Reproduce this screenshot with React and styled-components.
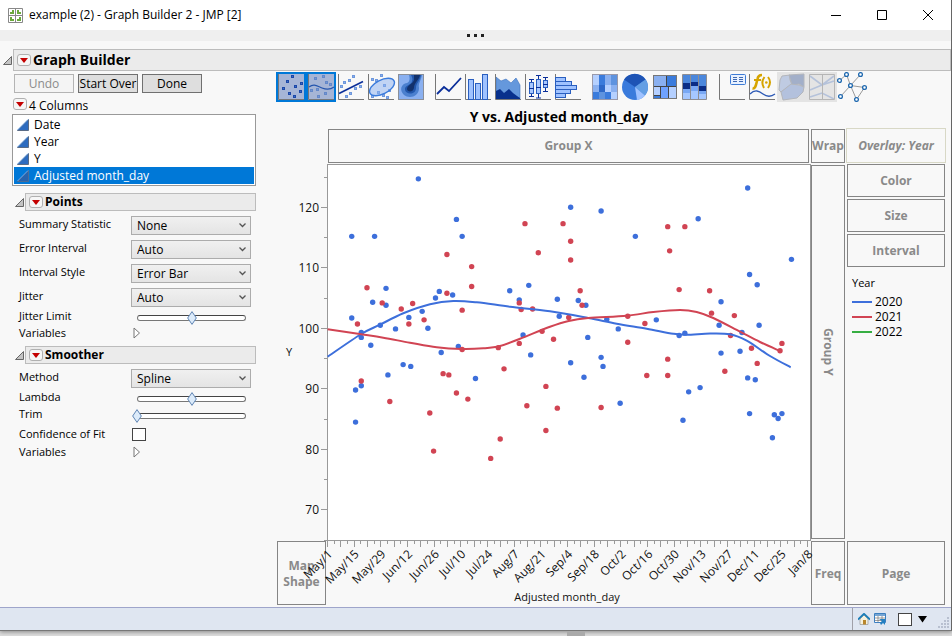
import React from "react";
import styled, { createGlobalStyle, css } from "styled-components";

const BLUE = "#3d6fdb";
const RED = "#d14453";
const GREEN = "#36ae42";
const INK = "#0b2f9a";
const MID = "#3a7bdc";
const LIGHT = "#8ab0f0";
const PALE = "#b5d0ff";

const Global = createGlobalStyle`
  *, *::before, *::after { box-sizing: border-box; }
  body { margin: 0; background: #dcdcdc; font: 12px/16px "Open Sans", "Noto Sans", sans-serif; color: #000; }
  button, input, select { font: inherit; color: inherit; margin: 0; }
  button { padding: 0; border: 0; background: none; }
  svg { display: block; }
`;

const Window = styled.div`
  display: flex;
  flex-direction: column;
  min-height: calc(100vh - 5px);
  background: #f8f8f8;
  border-right: 1px solid #666;
  border-bottom: 1px solid #777;
  box-shadow: 0 1px 4px #888;
`;

const TitleBar = styled.header`
  display: flex;
  align-items: center;
  height: 30px;
  padding-left: 8px;
  gap: 6px;
  background: #fff;
`;
const WindowTitle = styled.h1`
  flex: 1;
  margin: 0;
  font-size: 12px;
  font-weight: 400;
`;
const WindowControls = styled.div`
  display: flex;
`;
const WindowButton = styled.button`
  display: grid;
  place-items: center;
  width: 46px;
  height: 30px;
`;
const MenuStrip = styled.div`
  display: grid;
  place-items: center;
  height: 11px;
  background: #efefef;
`;

const OutlineRow = styled.div`
  display: flex;
  align-items: center;
  gap: 1px;
  padding-left: 3px;
  margin-top: ${(p) => p.$top}px;
`;
const OutlineBar = styled.div`
  display: flex;
  flex: 1;
  align-items: center;
  gap: 2px;
  height: ${(p) => (p.$large ? 22 : 18)}px;
  padding-left: 3px;
  background: #ebebeb;
  border: 1px solid #bcbcbc;
`;
const OutlineTitle = styled.h2`
  margin: 0;
  font-size: ${(p) => (p.$large ? 14 : 12)}px;
  line-height: 16px;
  font-weight: 700;
`;
const MenuButton = styled.button`
  display: grid;
  place-items: center;
  width: 14px;
  height: 12px;
  border: 1px solid #b0b0b0;
  border-radius: 3px;
  background: #f6f6f6;
`;

const Workspace = styled.main`
  display: grid;
  grid-template-columns: 277px 1fr;
  flex: 1;
`;
const Sidebar = styled.aside`
  padding: 3px 21px 0 12px;
`;
const Actions = styled.div`
  display: flex;
  gap: 4px;
  padding-left: 2px;
`;
const ActionButton = styled.button`
  width: 60px;
  height: 19px;
  line-height: 16px;
  white-space: nowrap;
  border: 1px solid #707070;
  background: #dedede;
  &:disabled {
    color: #8b8b8b;
    background: #f4f4f4;
    border-color: #b4b4b4;
  }
`;
const ColumnsHeading = styled.div`
  display: flex;
  align-items: flex-end;
  gap: 2px;
  height: 21px;
  padding-left: 1px;
  > button { margin-bottom: 4px; }
`;
const ColumnList = styled.ul`
  margin: 0;
  padding: 1px;
  list-style: none;
  border: 1px solid #999;
  background: #fff;
`;
const ColumnItem = styled.li`
  display: flex;
  align-items: center;
  gap: 5px;
  height: 17px;
  padding-left: 3px;
  color: ${(p) => (p.$selected ? "#fff" : "#000")};
  background: ${(p) => (p.$selected ? "#0078d7" : "transparent")};
`;
const Properties = styled.div`
  padding: ${(p) => p.$top}px 4px 0 7px;
`;
const Property = styled.div`
  display: grid;
  grid-template-columns: 112px 120px;
  align-items: ${(p) => (p.$tall || p.$tight ? "start" : "center")};
  height: ${(p) => p.$height || 17}px;
  ${(p) => p.$tall && css`padding-top: 2px;`}
`;
const PropertyLabel = styled.label`
  font-size: 11px;
  line-height: ${(p) => (p.$tight ? 12 : 16)}px;
`;
const SelectBox = styled.div`
  display: grid;
  align-items: center;
  > * { grid-area: 1 / 1; }
  > svg { justify-self: end; margin-right: 5px; pointer-events: none; }
`;
const Select = styled.select`
  appearance: none;
  width: 100%;
  height: 19px;
  padding: 0 20px 0 5px;
  line-height: 17px;
  border: 1px solid #acacac;
  border-radius: 0;
  background: linear-gradient(#f0f0f0, #e4e4e4);
`;
const SliderBox = styled.div`
  display: grid;
  align-items: center;
  padding-left: 1px;
  > * { grid-area: 1 / 1; }
`;
const SliderTrack = styled.div`
  height: 6px;
  margin: 0 5px;
  border: 1px solid #777;
  border-top-color: #444;
  border-radius: 3px;
  background: #fff;
`;
const SliderInput = styled.input`
  appearance: none;
  width: 100%;
  height: 16px;
  background: transparent;
  &::-webkit-slider-thumb {
    appearance: none;
    width: 10px;
    height: 10px;
    border: 1px solid #5b80b0;
    background: #dcebfa;
    transform: scaleX(0.68) rotate(45deg);
  }
`;
const Checkbox = styled.input`
  appearance: none;
  width: 14px;
  height: 13px;
  border: 1px solid #444;
  background: #fff;
`;
const CheckCell = styled.div`
  display: flex;
  padding-left: ${(p) => p.$inset}px;
`;

const Stage = styled.section`
  padding-right: 6px;
`;
const Toolbar = styled.div`
  display: flex;
  gap: 7px;
  margin: 1px 0 0 -1px;
`;
const ToolGroup = styled.div`
  display: flex;
`;
const ToolButton = styled.button`
  width: 30px;
  height: 30px;
  background: ${(p) => (p.$selected ? "#a6b5d6" : p.disabled ? "#e4e4e4" : "transparent")};
  box-shadow: ${(p) => (p.$selected ? "inset 0 0 0 2px #0078d7" : "none")};
`;
const GraphTitle = styled.h2`
  height: 27px;
  margin: 0;
  padding-right: 104px;
  font-size: 14px;
  line-height: 30px;
  font-weight: 700;
  text-align: center;
`;
const GraphGrid = styled.div`
  display: grid;
  grid-template-columns: 50px 1fr 34px 100px;
  grid-template-rows: 35px 1fr 65px;
`;
const areas = {
  groupX: "grid-area: 1 / 2; margin: 0 2px 0 1px; height: 34px;",
  wrap: "grid-area: 1 / 3; height: 34px;",
  overlay:
    "grid-area: 1 / 4; margin: -1px -1px 0 1px; height: 35px; font-style: italic; border-color: #d8d8c6;",
  groupY: "grid-area: 2 / 3; margin: 1px 0 2px; writing-mode: vertical-rl;",
  mapShape: "grid-area: 3 / 1; margin: 0 1px 1px 0; padding-top: 2px;",
  freq: "grid-area: 3 / 3; margin-bottom: 1px; padding-top: 2px;",
  page: "grid-area: 3 / 4; margin: 0 0 1px 2px; padding-top: 2px;",
  role: "height: 33px;",
};
const DropZone = styled.div`
  display: flex;
  align-items: center;
  justify-content: center;
  text-align: center;
  font-weight: 700;
  color: #8a8a8a;
  border: 1px solid #858585;
  ${(p) => areas[p.$area]}
`;
const RoleColumn = styled.div`
  grid-area: 2 / 4;
  display: flex;
  flex-direction: column;
  gap: 2px;
  padding-left: 2px;
`;
const Legend = styled.div`
  padding: 5px 0 0 5px;
`;
const LegendTitle = styled.div`
  padding-bottom: 2px;
  font-size: 11px;
  line-height: 18px;
`;
const LegendItem = styled.div`
  display: flex;
  align-items: center;
  gap: 3px;
  height: 15px;
  line-height: 15px;
`;
const Swatch = styled.span`
  width: 20px;
  height: 2px;
  background: ${(p) => p.$color};
`;
const Chart = styled.svg`
  grid-area: 2 / 1 / 4 / 3;
  width: 100%;
  height: auto;
  z-index: 1;
  pointer-events: none;
  overflow: visible;
`;
const ChartText = styled.text`
  font-size: ${(p) => (p.$small ? 11 : 12)}px;
  fill: #111;
`;

const StatusBar = styled.footer`
  display: flex;
  align-items: stretch;
  justify-content: flex-end;
  height: 23px;
  background: #dfe6f1;
  border-top: 1px solid #9fa5cb;
`;
const StatusTools = styled.div`
  display: flex;
  align-items: center;
  gap: 4px;
  padding-left: 5px;
  border-left: 1px solid #a0a0a8;
`;
const StatusCheck = styled(Checkbox)`
  margin: 0 2px 0 8px;
`;
const StatusGrip = styled.div`
  align-self: flex-end;
  margin-left: 10px;
`;
const Backdrop = styled.div`
  height: 5px;
  padding-left: 567px;
`;
const ScrollPiece = styled.div`
  width: 18px;
  height: 5px;
  background: #aaa;
`;

/* ---------- small glyphs ---------- */

const Disclosure = () => (
  <svg width="9" height="9" viewBox="0 0 9 9">
    <path d="M8.5 .5V8.5H.5Z" fill="#c4c4c4" stroke="#666" />
  </svg>
);
const RedTriangle = ({ label }) => (
  <MenuButton aria-label={label}>
    <svg width="8" height="5" viewBox="0 0 8 5"><path d="M0 0H8L4 5Z" fill="#c40000" /></svg>
  </MenuButton>
);
const Continuous = ({ dim }) => (
  <svg width="12" height="12" viewBox="0 0 12 12">
    <path d="M.5 11.5L11.5 .5V11.5Z" fill={dim ? "#2763ad" : "#2d6cc0"} stroke={dim ? "#4d6c94" : "#5a6c86"} />
    <path d="M.5 11L11 .5" stroke="#6aa5ea" />
  </svg>
);
const Expand = () => (
  <svg width="8" height="12" viewBox="0 0 8 12"><path d="M1 1V11L6.5 6Z" fill="#fff" stroke="#777" /></svg>
);

/* ---------- toolbar drawings ---------- */

const Frame = () => <path d="M2.5 2V27.5H28" fill="none" stroke="#777" />;
const Dots = ({ at, color = LIGHT, edge = "#5b85cb" }) =>
  at.map(([x, y]) => (
    <rect key={`${x}-${y}`} x={x - 1} y={y - 1} width="2" height="2" fill={color} stroke={edge} strokeWidth="1" />
  ));

const drawings = {
  points: (
    <>
      <Frame />
      <Dots at={[[16.5, 4.5], [11.5, 9.5], [25.5, 11.5], [7.5, 16.5], [19.5, 14.5], [24.5, 19.5], [13.5, 21.5], [18.5, 24.5]]} color="#3a6cc8" edge="#1c48a8" />
    </>
  ),
  smoother: (
    <>
      <Frame />
      <Dots at={[[9.5, 6.5], [17.5, 4.5], [20.5, 10.5], [24.5, 12.5], [5.5, 18.5], [11.5, 17.5], [19.5, 21.5], [12.5, 24.5]]} color="#7597d4" edge="#6488c9" />
      <path d="M3 15C8 11 11 14 16 16S24 18 28 15" fill="none" stroke="#2555ad" strokeWidth="1.2" />
    </>
  ),
  fit: (
    <>
      <Frame />
      <Dots at={[[17.5, 4.5], [13.5, 8.5], [8.5, 10.5], [5.5, 14.5], [24.5, 14.5], [19.5, 16.5], [14.5, 21.5], [10.5, 24.5]]} edge="#6f98dc" />
      <path d="M3 21.5L27 9.5" stroke={INK} strokeWidth="1.8" />
    </>
  ),
  ellipse: (
    <>
      <Frame />
      <Dots at={[[15.5, 3.5], [6.5, 7.5], [10.5, 8.5], [18.5, 13.5], [23.5, 18.5], [12.5, 20.5], [6.5, 24.5], [17.5, 23.5], [21.5, 25.5]]} edge="#6f98dc" />
      <ellipse cx="16" cy="15" rx="13.5" ry="7" transform="rotate(-27 16 15)" fill="#8ab0f0" fillOpacity=".5" stroke={MID} strokeWidth="1.4" />
    </>
  ),
  contour: (
    <>
      <rect x="2.5" y="2.5" width="25" height="25" fill={LIGHT} stroke="#8a8f99" />
      <path d="M13 3H26C25 9 22 11 23 16C23 25 13 27 8 23C3 18 5 12 11 11C14 10 14 6 13 3Z" fill="#4b80cf" />
      <path d="M15 3H25C24 9 20 11 20 16C20 23 10 23 9 18C8 13 16 13 16 9C17 7 16 5 15 3Z" fill="#2256ab" />
      <path d="M18 3H24C23 8 18 11 18 16C17 21 11 20 11 17C11 13 17 12 18 8Z" fill="#12316c" />
    </>
  ),
  line: (
    <>
      <Frame />
      <path d="M4 22L11 15L16 19L28 6" fill="none" stroke={INK} strokeWidth="1.8" />
    </>
  ),
  bar: (
    <>
      <Frame />
      <g fill="#9fc2ff" stroke="#2a5fc0">
        <rect x="5.5" y="7.5" width="5" height="20" />
        <rect x="12.5" y="11.5" width="5" height="16" />
        <rect x="19.5" y="2.5" width="5" height="25" />
      </g>
    </>
  ),
  area: (
    <>
      <path d="M3 5L8 9L13 7L18 11L23 6L27 13V27H3Z" fill="#6598dc" stroke="#3d72bf" strokeWidth=".6" />
      <path d="M3 19L7 17L11 21L16 17L20 21L24 24L27 26V27H3Z" fill="#08308c" />
      <path d="M2.5 2V27.5H28" fill="none" stroke="#777" />
    </>
  ),
  box: (
    <>
      <Frame />
      <path d="M6 7.5H11M8.5 7V24M6 24.5H11M13 3.5H18M15.5 3V26M13 26H18M20 5.5H25M22.5 5V19M20 19.5H25" stroke={INK} />
      <g fill="#a9c8ff" stroke="#2a5fc0">
        <rect x="6.5" y="10.5" width="4" height="11" />
        <rect x="13.5" y="7.5" width="4" height="14" />
        <rect x="20.5" y="8.5" width="4" height="7" />
      </g>
      <path d="M6 16.5H11M13 15.5H18M20 12.5H25" stroke={INK} />
    </>
  ),
  histogram: (
    <>
      <Frame />
      <g fill="#9fc2ff" stroke="#2a5fc0">
        <rect x="2.5" y="5.5" width="10" height="4" />
        <rect x="2.5" y="9.5" width="16" height="4" />
        <rect x="2.5" y="13.5" width="21" height="4" />
        <rect x="2.5" y="17.5" width="15" height="4" />
        <rect x="2.5" y="21.5" width="10" height="4" />
      </g>
    </>
  ),
  heatmap: (
    <>
      <rect x="2" y="2" width="26" height="26" fill={LIGHT} />
      <path d="M3 3H9V13H3ZM15 13H21V20H15ZM21 20H27V27H21Z" fill={PALE} />
      <path d="M9 3H15V13H9ZM3 20H9V27H3ZM15 20H21V27H15Z" fill={MID} />
      <path d="M9 13H15V20H9Z" fill="#2d68c8" />
      <path d="M21 3H27V13H21ZM9 20H15V27H9Z" fill="#5e93df" />
      <rect x="2.5" y="2.5" width="25" height="25" fill="none" stroke="#99a" />
    </>
  ),
  pie: (
    <>
      <circle cx="15" cy="15" r="13" fill={MID} />
      <path d="M15 15L4 7.5A13 13 0 0 1 25.5 7.5Z" fill="#1e54b5" />
      <path d="M15 15L25.5 7.5A13 13 0 0 1 25 23.5Z" fill="#649fe4" />
      <path d="M15 15L25 23.5A13 13 0 0 1 17 28Z" fill="#9fc2ff" />
    </>
  ),
  treemap: (
    <>
      <rect x="3.5" y="3.5" width="23" height="23" fill={LIGHT} stroke="#777" />
      <path d="M17 4H26V14H17Z" fill={MID} />
      <path d="M4 15H10V23H4ZM19 15H26V26H19Z" fill={PALE} />
      <path d="M4 23H10V26H4Z" fill={MID} />
      <path d="M10 15H19V26H10Z" fill="#6fa2ff" />
      <path d="M16.5 4V14M4 14.5H26M10.5 15V26M18.5 15V26M4 23.5H10" fill="none" stroke="#444" />
    </>
  ),
  mosaic: (
    <>
      <rect x="2.5" y="2.5" width="24" height="25" fill="#a5c7ff" />
      <path d="M3 3H10V11H3ZM11 3H18V10H11ZM19 3H26V14H19Z" fill="#4b87dc" />
      <path d="M3 11H10V17H3ZM11 10H18V14H11ZM19 14H26V19H19Z" fill="#0a2d86" />
      <path d="M3 17H10V21H3ZM11 14H18V19H11ZM19 19H26V22H19Z" fill="#79a8f4" />
      <path d="M2.5 2.5H26.5V27.5H2.5ZM10.5 3V27M18.5 3V27" fill="none" stroke="#8e8e92" />
    </>
  ),
  caption: (
    <>
      <Frame />
      <rect x="13.5" y="2.5" width="15" height="10" rx="1" fill="#e8f1ff" stroke="#3d7bd6" />
      <path d="M16 5.5H20M22 5.5H26M16 7.5H20M22 7.5H26M16 9.5H20M22 9.5H26" stroke="#12469f" strokeWidth=".8" />
    </>
  ),
  formula: (
    <>
      <Frame />
      <g fill="none" stroke="#d6a400" strokeWidth="2">
        <path d="M5.5 16.5C9 17 9 12 10.5 7C11 4 12 3 15 3" strokeWidth="2.6" />
        <path d="M7 8H14M17.5 5Q13.5 10 17 16M21 5Q25 10 21 16" />
      </g>
      <circle cx="19.3" cy="10.5" r="1.3" fill="#d6a400" />
      <path d="M3 22C8 17 12 19 16 22S24 25 28 22" fill="none" stroke="#2c59b5" strokeWidth="1.3" />
    </>
  ),
  map: (
    <>
      <path d="M5 4L13 3V8L15 12L4 20L2 18L3 8Z" fill="#bfcbe2" stroke="#b3b6bc" />
      <path d="M12 3L27 2V15L22 12L15 13Z" fill="#a2afc9" stroke="#b3b6bc" />
      <path d="M4 20L14 12L22 13L27 15L26 20L20 26L6 28Z" fill="#b3c1dd" stroke="#b3b6bc" />
    </>
  ),
  parallel: (
    <>
      <path d="M3 4L15 13L27 4M3 18L15 13L27 9M3 25L15 21L27 27" fill="none" stroke="#b5c2da" strokeWidth="1.6" />
      <path d="M2.5 2.5H27.5V27.5H2.5ZM15.5 3V27" fill="none" stroke="#b5b5b5" />
    </>
  ),
  network: (
    <>
      <path d="M2.5 8.5L9.5 2.5L13.5 13.5L23.5 2.5M13.5 13.5L3.5 24.5M13.5 13.5L27.5 15.5L19.5 27.5Z" fill="none" stroke="#999" />
      {[[2.5, 8.5], [9.5, 2.5], [23.5, 2.5], [13.5, 13.5], [27.5, 15.5], [3.5, 24.5], [19.5, 27.5]].map(([x, y]) => (
        <circle key={x} cx={x} cy={y} r="1.9" fill="#fff" stroke="#1d67ae" strokeWidth="1.3" />
      ))}
    </>
  ),
};
const toolGroups = [
  ["points", "smoother", "fit", "ellipse", "contour"],
  ["line", "bar", "area", "box", "histogram"],
  ["heatmap", "pie", "treemap", "mosaic"],
  ["caption", "formula", "map", "parallel", "network"],
];
const activeTools = ["points", "smoother"];
const disabledTools = ["map", "parallel"];

/* ---------- chart data: [day since May 1, value] ---------- */

const data2020 = [
  [48, 124.7], [68, 118], [13, 115.2], [25, 115.2], [71, 115.2], [31, 106.6], [24, 104.3], [31, 103.8], [59, 106.1],
  [57, 105], [66, 105.5], [13, 101.7], [50, 102.8], [43, 101.8], [28, 100.5], [36, 99.9], [53, 100], [18, 99.3],
  [18, 98.5], [23, 97.2], [40, 94], [44, 93.7], [32, 92.3], [60, 96], [69, 97], [78, 91.7], [96, 106.2], [106, 107.1],
  [101, 104.7], [103, 98.9], [107, 95.6], [15, 89.8], [18, 90.5], [15, 84.5], [128, 120], [144, 119.4], [162, 115.2],
  [195, 118.1], [221, 123.2], [244, 111.4], [222, 108.9], [226, 107.2], [207, 104.4], [206, 100.5], [227, 100.5],
  [218, 99.3], [217, 96.2], [207, 95.9], [188, 99.2], [185, 98.8], [173, 101.4], [153, 99.9], [147, 101.5],
  [136, 103.8], [132, 104.6], [121, 104.8], [122, 102], [137, 98.5], [144, 95.2], [145, 93.7], [128, 94.3],
  [135, 91.9], [221, 91.8], [225, 91.5], [154, 87.6], [187, 84.8], [190, 89.5], [196, 90.2], [222, 85.9],
  [235, 85.7], [237, 85.1], [239, 85.9], [234, 81.9],
];
const data2021 = [
  [104, 117.3], [111, 112.5], [63, 112.2], [76, 110.2], [76, 106.9], [63, 105.8], [21, 106.7], [29, 104.2],
  [45, 104.1], [39, 103.2], [71, 103], [51, 101.4], [16, 100.7], [43, 100.7], [101, 104.2], [102, 103.1],
  [108, 103.2], [113, 99.5], [101, 97.5], [90, 96.8], [71, 96.5], [93, 93.3], [61, 92.5], [64, 92.3], [18, 91.3],
  [33, 87.9], [54, 86], [56, 79.7], [68, 89.3], [74, 88.3], [86, 78.5], [91, 81.7], [105, 87.2], [115, 90.4],
  [115, 83.1], [124, 117.3], [128, 114.4], [128, 111.3], [179, 116.8], [188, 116.8], [180, 112.8], [185, 106.4],
  [201, 106.2], [133, 106.2], [134, 103.8], [127, 101.8], [158, 102], [167, 100.8], [119, 98.2], [158, 97.7],
  [179, 94.9], [168, 92.2], [179, 92.2], [202, 102.5], [214, 102.1], [212, 98.8], [223, 96.7], [226, 94.2],
  [209, 92.9], [239, 97.5], [238, 96.3], [121, 86.8], [144, 86.9],
];
const spline2020 = [
  [327.6, 356.7], [361.3, 334], [380, 324.7], [403.3, 313.3], [430, 304.3], [453.3, 301], [476.7, 302.3],
  [510, 306.7], [550, 311.3], [588.3, 318], [616.7, 323.7], [646.7, 328.7], [673.3, 333.7], [686.7, 334.8],
  [710, 333.5], [730, 334.3], [746.7, 340.7], [770, 356], [790.7, 367.3],
];
const spline2021 = [
  [327.6, 329.3], [361.3, 334.3], [383.3, 337.7], [410, 342.7], [436.7, 347.3], [462, 349], [483.3, 348.3],
  [500, 346], [520, 338.7], [550, 326.7], [568.7, 320.9], [588.3, 318], [626.7, 315.7], [653.3, 312], [680, 310],
  [696.7, 312], [713.3, 318], [740, 331.7], [760, 342], [780, 351],
];
const dateLabels = [
  "May/1", "May/15", "May/29", "Jun/12", "Jun/26", "Jul/10", "Jul/24", "Aug/7", "Aug/21", "Sep/4", "Sep/18",
  "Oct/2", "Oct/16", "Oct/30", "Nov/13", "Nov/27", "Dec/11", "Dec/25", "Jan/8",
];

const px = (day) => 327 + day * 1.9035;
const py = (value) => 207.3 + (120 - value) * 6.05;

/* Catmull-Rom interpolation through the given points. */
function smoothPath(p) {
  let d = `M${p[0][0]} ${p[0][1]}`;
  for (let i = 0; i < p.length - 1; i += 1) {
    const a = p[i - 1] || p[i];
    const b = p[i];
    const c = p[i + 1];
    const e = p[i + 2] || c;
    d += `C${b[0] + (c[0] - a[0]) / 6} ${b[1] + (c[1] - a[1]) / 6} ${c[0] - (e[0] - b[0]) / 6} ${c[1] - (e[1] - b[1]) / 6} ${c[0]} ${c[1]}`;
  }
  return d;
}

function ScatterChart() {
  return (
    <Chart viewBox="277 164 534 442" role="img" aria-label="Y vs. Adjusted month_day">
      <rect x="327.5" y="164.5" width="483" height="376" fill="#fff" stroke="#999" />
      <g stroke="#999" shapeRendering="crispEdges">
        {[125, 120, 115, 110, 105, 100, 95, 90, 85, 80, 75, 70].map((v) => (
          <path key={v} d={`M${v % 10 ? 324 : 321} ${Math.floor(py(v)) + 0.5}H327`} />
        ))}
        <path d="M324 540.5H327" />
        {Array.from({ length: 73 }, (_, i) => (
          <path key={i} d={`M${Math.floor(327.4 + i * 6.67) + 0.5} 541V${i % 2 ? 544 : 547}`} />
        ))}
      </g>
      {[120, 110, 100, 90, 80, 70].map((v) => (
        <ChartText key={v} x="319" y={Math.floor(py(v)) + 5} textAnchor="end">{v}</ChartText>
      ))}
      <g fill={BLUE}>{data2020.map(([d, v]) => <circle key={`${d}-${v}`} cx={px(d)} cy={py(v)} r="2.7" />)}</g>
      <g fill={RED}>{data2021.map(([d, v]) => <circle key={`${d}-${v}`} cx={px(d)} cy={py(v)} r="2.7" />)}</g>
      <path d={smoothPath(spline2020)} fill="none" stroke={BLUE} strokeWidth="2" />
      <path d={smoothPath(spline2021)} fill="none" stroke={RED} strokeWidth="2" />
      {dateLabels.map((label, i) => {
        const x = 333 + i * 26.69;
        return (
          <ChartText key={label} x={x} y="555" textAnchor="end" transform={`rotate(-45 ${x} 555)`}>{label}</ChartText>
        );
      })}
      <ChartText $small x="289" y="356" textAnchor="middle">Y</ChartText>
      <ChartText $small x="567" y="601" textAnchor="middle">Adjusted month_day</ChartText>
    </Chart>
  );
}

/* ---------- form pieces ---------- */

function SelectProperty({ id, label, value }) {
  return (
    <Property $tall $height={24}>
      <PropertyLabel htmlFor={id}>{label}</PropertyLabel>
      <SelectBox>
        <Select id={id} defaultValue={value}><option>{value}</option></Select>
        <svg width="7" height="5" viewBox="0 0 7 5"><path d="M.5 .5L3.5 3.5L6.5 .5" fill="none" stroke="#555" strokeWidth="1.3" /></svg>
      </SelectBox>
    </Property>
  );
}
function SliderProperty({ id, label, value }) {
  return (
    <Property $tight>
      <PropertyLabel $tight htmlFor={id}>{label}</PropertyLabel>
      <SliderBox>
        <SliderTrack />
        <SliderInput id={id} type="range" min="0" max="100" defaultValue={value} />
      </SliderBox>
    </Property>
  );
}
function VariablesProperty({ id, tight }) {
  return (
    <Property $tight={tight} $height={tight ? 16 : 18}>
      <PropertyLabel $tight={tight} htmlFor={id}>Variables</PropertyLabel>
      <CheckCell $inset={2}><button id={id}><Expand /></button></CheckCell>
    </Property>
  );
}

export default function App() {
  return (
    <>
      <Global />
      <Window>
        <TitleBar>
          <svg width="15" height="15" viewBox="0 0 15 15">
            <path d="M.5 .5H14.5V14.5H.5ZM7.5 0V15M0 7.5H15" fill="#fff" stroke="#888" />
            <path d="M2 4H4V2H6V6H2ZM9 2H11V4H13V6H9ZM2 9H4V11H6V13H2ZM9 11H11V9H13V13H9Z" fill="#6aa83c" />
          </svg>
          <WindowTitle>example (2) - Graph Builder 2 - JMP [2]</WindowTitle>
          <WindowControls>
            <WindowButton aria-label="Minimize"><svg width="10" height="10"><path d="M0 5.5H10" stroke="#000" /></svg></WindowButton>
            <WindowButton aria-label="Maximize"><svg width="10" height="10"><path d="M.5 .5H9.5V9.5H.5Z" fill="none" stroke="#000" /></svg></WindowButton>
            <WindowButton aria-label="Close"><svg width="10" height="10"><path d="M0 0L10 10M10 0L0 10" stroke="#000" /></svg></WindowButton>
          </WindowControls>
        </TitleBar>
        <MenuStrip>
          <svg width="17" height="3" viewBox="0 0 17 3"><path d="M0 0H3V3H0ZM7 0H10V3H7ZM14 0H17V3H14Z" fill="#222" /></svg>
        </MenuStrip>
        <OutlineRow $top={8}>
          <Disclosure />
          <OutlineBar $large>
            <RedTriangle label="Graph Builder menu" />
            <OutlineTitle $large>Graph Builder</OutlineTitle>
          </OutlineBar>
        </OutlineRow>
        <Workspace>
          <Sidebar>
            <Actions>
              <ActionButton disabled>Undo</ActionButton>
              <ActionButton>Start Over</ActionButton>
              <ActionButton>Done</ActionButton>
            </Actions>
            <ColumnsHeading><RedTriangle label="Columns menu" />4 Columns</ColumnsHeading>
            <ColumnList>
              {["Date", "Year", "Y", "Adjusted month_day"].map((name, i) => (
                <ColumnItem key={name} $selected={i === 3}><Continuous dim={i === 3} />{name}</ColumnItem>
              ))}
            </ColumnList>
            <OutlineRow $top={7}>
              <Disclosure />
              <OutlineBar><RedTriangle label="Points menu" /><OutlineTitle>Points</OutlineTitle></OutlineBar>
            </OutlineRow>
            <Properties $top={3}>
              <SelectProperty id="summary" label="Summary Statistic" value="None" />
              <SelectProperty id="error" label="Error Interval" value="Auto" />
              <SelectProperty id="interval" label="Interval Style" value="Error Bar" />
              <SelectProperty id="jitter" label="Jitter" value="Auto" />
              <SliderProperty id="limit" label="Jitter Limit" value={50} />
              <VariablesProperty id="point-vars" tight />
            </Properties>
            <OutlineRow $top={3}>
              <Disclosure />
              <OutlineBar><RedTriangle label="Smoother menu" /><OutlineTitle>Smoother</OutlineTitle></OutlineBar>
            </OutlineRow>
            <Properties $top={3}>
              <SelectProperty id="method" label="Method" value="Spline" />
              <SliderProperty id="lambda" label="Lambda" value={50} />
              <SliderProperty id="trim" label="Trim" value={0} />
              <Property $height={18}>
                <PropertyLabel htmlFor="confidence">Confidence of Fit</PropertyLabel>
                <CheckCell $inset={1}><Checkbox id="confidence" type="checkbox" /></CheckCell>
              </Property>
              <VariablesProperty id="smooth-vars" />
            </Properties>
          </Sidebar>
          <Stage>
            <Toolbar>
              {toolGroups.map((group) => (
                <ToolGroup key={group[0]}>
                  {group.map((tool) => (
                    <ToolButton key={tool} aria-label={tool} $selected={activeTools.includes(tool)} disabled={disabledTools.includes(tool)}>
                      <svg width="30" height="30" viewBox="0 0 30 30">{drawings[tool]}</svg>
                    </ToolButton>
                  ))}
                </ToolGroup>
              ))}
            </Toolbar>
            <GraphTitle>Y vs. Adjusted month_day</GraphTitle>
            <GraphGrid>
              <DropZone $area="groupX">Group X</DropZone>
              <DropZone $area="wrap">Wrap</DropZone>
              <DropZone $area="overlay">Overlay: Year</DropZone>
              <DropZone $area="groupY">Group Y</DropZone>
              <RoleColumn>
                <DropZone $area="role">Color</DropZone>
                <DropZone $area="role">Size</DropZone>
                <DropZone $area="role">Interval</DropZone>
                <Legend>
                  <LegendTitle>Year</LegendTitle>
                  <LegendItem><Swatch $color={BLUE} />2020</LegendItem>
                  <LegendItem><Swatch $color={RED} />2021</LegendItem>
                  <LegendItem><Swatch $color={GREEN} />2022</LegendItem>
                </Legend>
              </RoleColumn>
              <DropZone $area="mapShape">Map Shape</DropZone>
              <ScatterChart />
              <DropZone $area="freq">Freq</DropZone>
              <DropZone $area="page">Page</DropZone>
            </GraphGrid>
          </Stage>
        </Workspace>
        <StatusBar>
          <StatusTools>
            <button aria-label="Home">
              <svg width="12" height="12" viewBox="0 0 12 12">
                <path d="M2 6L6 2L10 6V11.5H2Z" fill="#f6f1dc" stroke="#888" strokeWidth=".6" />
                <path d="M0 6.5L6 .8L12 6.5" fill="none" stroke="#1d7fb8" strokeWidth="1.8" />
                <rect x="5" y="7" width="3" height="4.5" fill="#b8862b" />
              </svg>
            </button>
            <button aria-label="Data table">
              <svg width="12" height="12" viewBox="0 0 12 12">
                <path d="M.5 .5H11.5V9.5H.5Z" fill="#fff" stroke="#3c7fc0" />
                <path d="M1 2H11" stroke="#3c7fc0" strokeWidth="1.4" />
                <path d="M1 5H11M1 7.5H11M4 3V9M8 3V9" stroke="#777" strokeWidth=".7" />
                <path d="M5 6H11V12L9 10L7 12L6 10L8 8Z" fill="#2480c2" />
              </svg>
            </button>
            <StatusCheck type="checkbox" aria-label="Select window" />
            <button aria-label="Window list">
              <svg width="9" height="7" viewBox="0 0 9 7"><path d="M0 0H9L4.5 6.5Z" /></svg>
            </button>
          </StatusTools>
          <StatusGrip>
            <svg width="14" height="14" viewBox="0 0 14 14">
              <path d="M10 1h2v2h-2zM7 4h2v2H7zM10 4h2v2h-2zM4 7h2v2H4zM7 7h2v2H7zM10 7h2v2h-2zM1 10h2v2H1zM4 10h2v2H4zM7 10h2v2H7zM10 10h2v2h-2z" fill="#b8c0d0" />
            </svg>
          </StatusGrip>
        </StatusBar>
      </Window>
      <Backdrop><ScrollPiece /></Backdrop>
    </>
  );
}
